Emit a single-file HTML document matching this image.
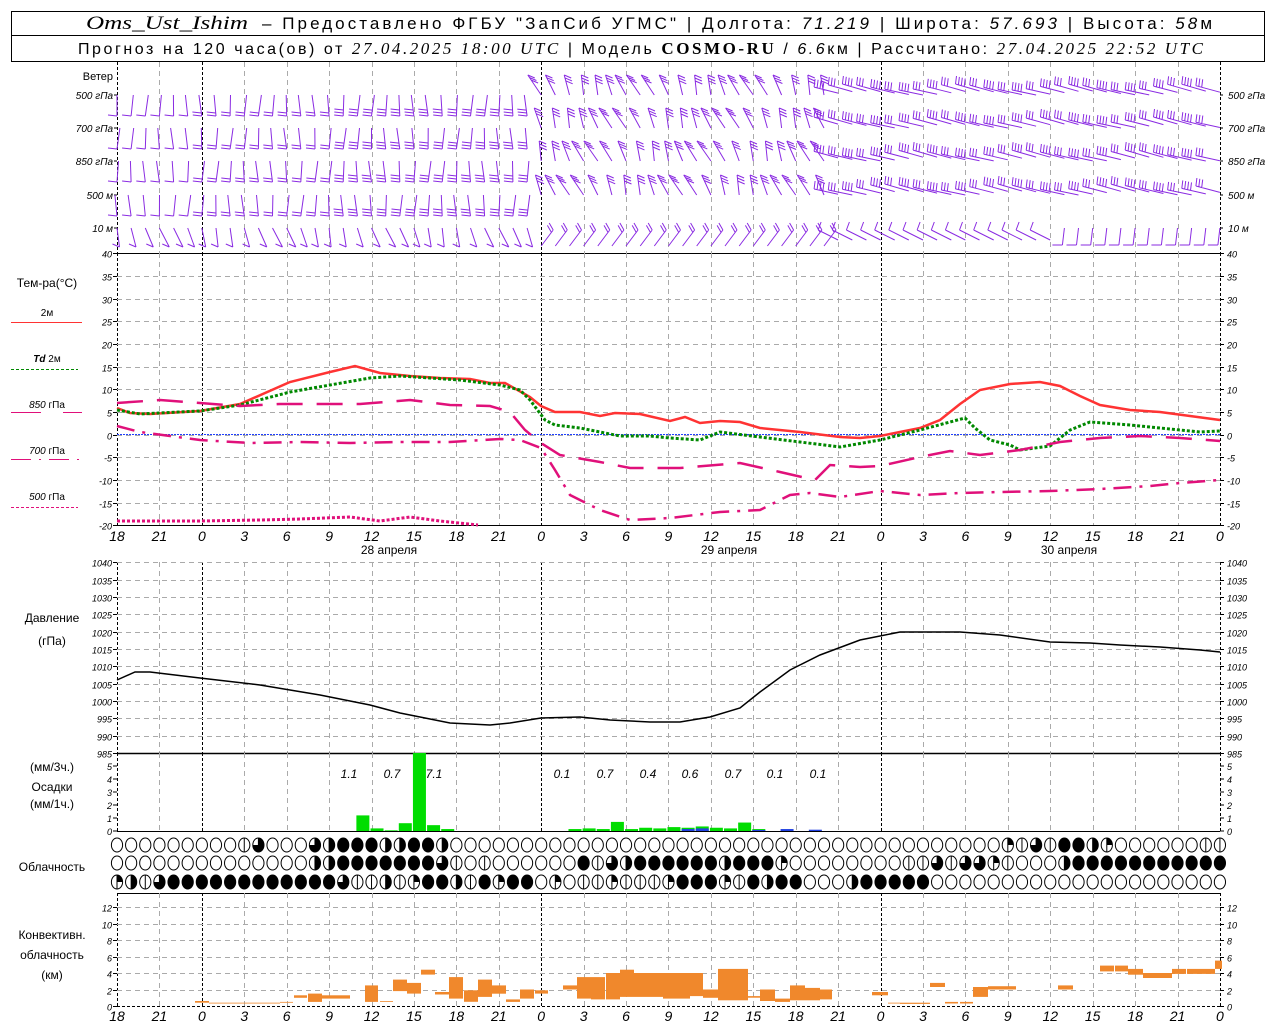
<!DOCTYPE html>
<html><head><meta charset="utf-8">
<style>
html,body{margin:0;padding:0;background:#fff;}
body{width:1280px;height:1024px;overflow:hidden;}
svg{display:block;font-family:"Liberation Sans","DejaVu Sans",sans-serif;}
</style></head>
<body>
<svg id="s" width="1280" height="1024" viewBox="0 0 1280 1024" xmlns="http://www.w3.org/2000/svg">
<rect x="0" y="0" width="1280" height="1024" fill="#fff"/>
<rect x="11.5" y="11.5" width="1253" height="50" fill="none" stroke="#000"/>
<line x1="11" y1="35.5" x2="1265" y2="35.5" stroke="#000"/>
<text x="86" y="29" font-size="19" font-family="Liberation Serif,serif" font-style="italic" textLength="162" lengthAdjust="spacingAndGlyphs">Oms_Ust_Ishim</text>
<text x="262" y="29" font-size="17" textLength="950" lengthAdjust="spacing">– Предоставлено ФГБУ "ЗапСиб УГМС" | Долгота: <tspan font-style="italic">71.219</tspan> | Широта: <tspan font-style="italic">57.693</tspan> | Высота: <tspan font-style="italic">58</tspan>м</text>
<text x="78" y="54" font-size="16" textLength="1125" lengthAdjust="spacing">Прогноз на 120 часа(ов) от <tspan font-style="italic" font-family="Liberation Serif,serif" font-size="17">27.04.2025 18:00 UTC</tspan>  | Модель <tspan font-family="Liberation Serif,serif" font-weight="bold" font-size="17">COSMO-RU</tspan> / <tspan font-style="italic">6.6</tspan>км | Рассчитано: <tspan font-style="italic" font-family="Liberation Serif,serif" font-size="17">27.04.2025 22:52 UTC</tspan></text>
<g id="g"></g>
</svg>
<script>
var g=document.getElementById('g');var out='';
function X(h){return 117+h*14.14;}
var X0=117,X1=1220;
function ln(x1,y1,x2,y2,st){out+='<line x1="'+x1+'" y1="'+y1+'" x2="'+x2+'" y2="'+y2+'" style="'+st+'"/>';}
function tx(x,y,t,st){out+='<text x="'+x+'" y="'+y+'" style="'+st+'">'+t+'</text>';}
var GR='stroke:#aaa;stroke-width:1;stroke-dasharray:5,4';
var MD='stroke:#000;stroke-width:1;stroke-dasharray:3,2';
function vgrid(y1,y2){for(var k=0;k<=26;k++){var x=Math.round(X(k*3))+0.5;var mid=(k%8==2);ln(x,y1,x,y2,mid||k==0?MD:GR);}ln(X1+0.5,y1,X1+0.5,y2,MD);}
// Wind panel
vgrid(62,253);
tx(113,80,'Ветер','font-size:11px;text-anchor:end');
var wr=[[95,'500 гПа'],[128,'700 гПа'],[161,'850 гПа'],[195,'500 м'],[228,'10 м']];
wr.forEach(function(r){tx(113,r[0]+4,r[1],'font-size:10px;text-anchor:end;font-style:italic');tx(1228,r[0]+4,r[1],'font-size:10px;font-style:italic');ln(114,r[0],117,r[0],'stroke:#000');ln(1220,r[0],1223,r[0],'stroke:#000');});
var bp='';
function f1(v){return v.toFixed(1);}
// staff P1->P2, feathers starting at P2 going back toward P1, feather vector (fx,fy)
function barb(x1,y1,x2,y2,n,fx,fy){bp+='M'+f1(x1)+' '+f1(y1)+'L'+f1(x2)+' '+f1(y2);var L=Math.hypot(x2-x1,y2-y1),ux=(x1-x2)/L,uy=(y1-y2)/L;for(var k=0;k<n;k++){var px=x2+ux*3*k,py=y2+uy*3*k;bp+='M'+f1(px)+' '+f1(py)+'l'+f1(fx)+' '+f1(fy);}}
for(var ri=0;ri<5;ri++){var y=wr[ri][0];for(var i=0;i<=78;i++){var x=X(i),s=Math.sin(i*0.8+ri*1.3);
 if(ri==4){
  if(x<540){barb(x,y,x+6+4*s,y+19,1,-7,-3);}
  else if(x<830){barb(x,y+18,x+12,y+2,2,-4,-7);}
  else if(x<1060){barb(x,y+12,x-20,y+2,1,3,-8);}
  else{barb(x,y,x-2,y+17,1,-10,0);}
  continue;}
 if(x<540){var n=(x<200?1:(x<330?2:3));barb(x+3*s,y,x,y+21,n,-9,-1);}
 else if(x<830){barb(x,y,x-8+6*s,y-20,3,7,3);}
 else{var n2=3+(i%2);barb(x,y-2+2*s,x-24,y-8+3*s,n2,1,-8);}
}}
out+='<path d="'+bp+'" fill="none" stroke="#8a2be2" stroke-width="1"/>';
ln(117,253.5,1220,253.5,'stroke:#000');
// Temperature panel
function TY(t){return 434.6-t*4.533;}
vgrid(253,525);
for(var t=-20;t<=40;t+=5){var y=Math.round(TY(t))+0.5;if(t>-20&&t<40)ln(117,y,1220,y,GR);ln(113,y,117,y,'stroke:#000');ln(1220,y,1224,y,'stroke:#000');tx(112,y+4,t,'font-size:9px;text-anchor:end;font-style:italic');tx(1227,y+4,t,'font-size:9px;font-style:italic');}
ln(117,525.5,1220,525.5,'stroke:#000');
ln(117,434.5,1220,434.5,'stroke:#2040ff;stroke-dasharray:2,1');
tx(47,287,'Тем-ра(°С)','font-size:12px;text-anchor:middle');
tx(47,316,'2м','font-size:10px;text-anchor:middle');ln(11,322.5,82,322.5,'stroke:#f33;stroke-width:1');
tx(47,362,'<tspan font-style="italic" font-weight="bold">Td</tspan>  2м','font-size:10px;text-anchor:middle');ln(11,369.5,78,369.5,'stroke:#080;stroke-dasharray:3,2');
tx(47,408,'<tspan font-style="italic">850</tspan> гПа','font-size:10px;text-anchor:middle');ln(11,412.5,82,412.5,'stroke:#e0107a;stroke-dasharray:30,22');
tx(47,454,'<tspan font-style="italic">700</tspan> гПа','font-size:10px;text-anchor:middle');ln(11,459.5,82,459.5,'stroke:#e0107a;stroke-dasharray:20,8,2,8');
tx(47,500,'<tspan font-style="italic">500</tspan> гПа','font-size:10px;text-anchor:middle');ln(11,507.5,78,507.5,'stroke:#e0107a;stroke-dasharray:3,2');
function pl(pts,st){var d='M';for(var i=0;i<pts.length;i+=2){d+=(i?'L':'')+pts[i]+' '+pts[i+1];}out+='<path d="'+d+'" fill="none" style="'+st+'"/>';}
pl([117,408,130,413,150,414,200,411,240,404,290,382,330,372,355,366,380,373,410,376,440,378,470,379,490,383,505,383,530,397,541,406,555,412,580,412,600,416,615,413,640,414,670,421,685,417,700,423,720,421,740,422,760,428,800,432,840,437,860,438,880,436,920,428,940,420,960,404,980,390,1010,384,1040,382,1060,386,1080,396,1100,405,1130,410,1160,412,1190,416,1220,420],'stroke:#f33;stroke-width:2.5');
pl([117,410,140,414,200,411,240,405,290,392,330,385,370,378,400,376,430,378,460,380,500,385,520,390,530,400,545,420,555,425,580,428,600,432,620,436,650,436,670,438,700,440,720,432,760,437,800,442,840,447,880,440,920,430,950,422,965,418,975,428,990,440,1010,445,1020,450,1050,446,1070,430,1090,422,1130,425,1160,428,1200,432,1220,431],'stroke:#080;stroke-width:3;stroke-dasharray:3,2');
pl([117,403,160,400,200,403,240,406,280,404,320,404,360,404,410,400,450,405,490,406,510,412,525,430,541,443,560,455,600,462,630,468,680,468,740,463,780,472,815,480,830,465,860,467,880,466,920,457,950,451,980,455,1020,450,1060,442,1100,438,1140,436,1180,438,1220,441],'stroke:#e0107a;stroke-width:2.5;stroke-dasharray:26,14');
pl([117,426,140,432,200,440,250,443,300,442,350,443,400,442,450,442,500,439,520,440,541,448,555,470,570,495,600,510,630,520,670,518,720,512,760,510,790,495,810,493,840,497,880,491,920,495,960,493,1000,492,1050,491,1100,489,1150,486,1180,483,1220,480],'stroke:#e0107a;stroke-width:2.5;stroke-dasharray:18,8,3,8');
pl([117,521,200,521,260,520,300,519,350,517,380,521,410,517,440,521,478,525],'stroke:#e0107a;stroke-width:3;stroke-dasharray:3,2');
function xlabels(y){for(var k=0;k<=26;k++){var hh=(18+k*3)%24;tx(X(k*3),y,hh,'font-size:14px;font-style:italic;text-anchor:middle');}}
xlabels(541);
tx(389,554,'28  апреля','font-size:12px;text-anchor:middle');tx(729,554,'29  апреля','font-size:12px;text-anchor:middle');tx(1069,554,'30  апреля','font-size:12px;text-anchor:middle');
// Pressure
function PY(p){return 753-(p-985)*3.47;}
vgrid(562,753);
for(var p=985;p<=1040;p+=5){var y=Math.round(PY(p))+0.5;if(p>985)ln(117,y,1220,y,GR);ln(113,y,117,y,'stroke:#000');ln(1220,y,1224,y,'stroke:#000');tx(112,y+4,p,'font-size:9px;text-anchor:end;font-style:italic');tx(1227,y+4,p,'font-size:9px;font-style:italic');}
tx(52,622,'Давление','font-size:12px;text-anchor:middle');tx(52,645,'(гПа)','font-size:12px;text-anchor:middle');
pl([117,680,135,672,150,672,200,678,260,685,320,695,370,705,400,713,450,723,490,725,510,723,541,718,580,717,610,720,650,722,680,722,710,717,740,708,760,692,790,670,820,655,860,640,900,632,960,632,1000,635,1050,642,1090,643,1120,645,1160,647,1200,650,1220,652],'stroke:#000;stroke-width:1.5');
ln(117,753.5,1220,753.5,'stroke:#000;stroke-width:1.5');
// Precip
vgrid(753,831);
for(var m=0;m<=5;m++){var y=831-m*13;ln(113,y,117,y,'stroke:#000');ln(1220,y,1224,y,'stroke:#000');tx(112,y+4,m,'font-size:9px;text-anchor:end;font-style:italic');tx(1227,y+4,m,'font-size:9px;font-style:italic');}
tx(52,771,'(мм/3ч.)','font-size:12px;text-anchor:middle');tx(52,791,'Осадки','font-size:12px;text-anchor:middle');tx(52,808,'(мм/1ч.)','font-size:12px;text-anchor:middle');
var pr=[[17,1.2],[18,0.2],[19,0.05],[20,0.6],[21,6.5],[22,0.45],[23,0.15],[32,0.15],[33,0.2],[34,0.15],[35,0.7],[36,0.15],[37,0.25],[38,0.2],[39,0.3],[40,0.25],[41,0.35],[42,0.25],[43,0.2],[44,0.65],[45,0.15]];
pr.forEach(function(b){var h=Math.min(b[1]*13,78);out+='<rect x="'+(X(b[0])-1)+'" y="'+(831-h)+'" width="13" height="'+h+'" fill="#00dd00"/>';});
[[40,0.15],[41,0.2],[45,0.08],[47,0.15],[49,0.1]].forEach(function(b){var h=b[1]*13;out+='<rect x="'+(X(b[0])-1)+'" y="'+(831-h)+'" width="13" height="'+h+'" fill="#2040e0"/>';});
[[349,'1.1'],[392,'0.7'],[434,'7.1'],[562,'0.1'],[605,'0.7'],[648,'0.4'],[690,'0.6'],[733,'0.7'],[775,'0.1'],[818,'0.1']].forEach(function(t){tx(t[0],778,t[1],'font-size:12px;font-style:italic;text-anchor:middle');});
ln(117,831.5,1220,831.5,'stroke:#000');
// Clouds
tx(52,871,'Облачность','font-size:12px;text-anchor:middle');
var rows=["000000000530003244422442"+"0".repeat(39)+"15354421"+"000000"+"55",
"00000000000000"+"22"+"4444444"+"3505"+"000000"+"4532"+"444444"+"2444"+"1"+"00000000"+"55353315"+"000"+"2"+"44444444444",
"1253"+"444444444444"+"35525144254144"+"010551555144415"+"4244"+"000"+"2"+"44444"+"0".repeat(21)];
var cy=[845,863,882];
rows.forEach(function(s,ri){for(var i=0;i<79;i++){var c=s[i]||'0',x=X(i),y=cy[ri],rx=5.6,ry=7;out+='<ellipse cx="'+x+'" cy="'+y+'" rx="'+rx+'" ry="'+ry+'" fill="'+(c=='4'?'#000':'#fff')+'" stroke="#000"/>';
 if(c=='5'||c=='2'||c=='1'||c=='3')ln(x,y-ry,x,y+ry,'stroke:#000');
 if(c=='2')out+='<path d="M'+x+' '+(y-ry)+'A'+rx+' '+ry+' 0 0 1 '+x+' '+(y+ry)+'Z" fill="#000"/>';
 if(c=='1')out+='<path d="M'+x+' '+y+'L'+x+' '+(y-ry)+'A'+rx+' '+ry+' 0 0 1 '+(x+rx)+' '+y+'Z" fill="#000"/>';
 if(c=='3')out+='<path d="M'+x+' '+y+'L'+x+' '+(y-ry)+'A'+rx+' '+ry+' 0 1 1 '+(x-rx)+' '+y+'Z" fill="#000"/>';}});
// Convective
function KY(k){return 1006-k*8.25;}
ln(117,893.5,1220,893.5,'stroke:#000');
vgrid(893,1006);
for(var k=0;k<=12;k+=2){var y=Math.round(KY(k))+0.5;if(k>0)ln(117,y,1220,y,GR);ln(113,y,117,y,'stroke:#000');ln(1220,y,1224,y,'stroke:#000');tx(112,y+4,k,'font-size:9px;text-anchor:end;font-style:italic');tx(1227,y+4,k,'font-size:9px;font-style:italic');}
ln(117,1006.5,1220,1006.5,'stroke:#000;stroke-dasharray:3,2');
tx(52,939,'Конвективн.','font-size:12px;text-anchor:middle');tx(52,959,'облачность','font-size:12px;text-anchor:middle');tx(52,979,'(км)','font-size:12px;text-anchor:middle');
var cb=[[195,209,.4,.6],[209,280,.3,.4],[280,293,.4,.5],[294,307,1,1.3],[308,322,.5,1.5],[322,350,.9,1.3],[365,378,.5,2.5],[380,393,.5,.6],[393,407,1.8,3.2],[407,421,1.5,2.8],[421,435,3.8,4.4],[435,449,1.4,1.7],[449,463,.9,3.5],[464,478,.5,1.9],[478,492,1.1,3.2],[492,506,1.5,2.5],[506,520,.5,.8],[520,534,.9,2],[535,548,1.5,1.9],[563,577,2,2.5],[577,591,.9,3.5],[591,605,.8,3.5],[606,620,.8,4],[620,634,1.1,4.4],[634,663,1.1,4],[663,690,.9,4],[690,703,1.2,4],[703,718,1,2],[718,748,.7,4.5],[748,760,1,1.2],[760,775,.6,2],[775,790,.5,.9],[790,805,.7,2.5],[805,820,.7,2.2],[820,832,.8,2],[872,888,1.3,1.7],[888,900,.3,.4],[900,930,.25,.4],[930,945,2.3,2.8],[945,958,.3,.5],[960,973,.3,.5],[973,988,1.1,2.3],[988,1016,2,2.4],[1058,1073,2,2.5],[1100,1114,4.2,4.9],[1115,1128,4.2,4.9],[1128,1143,3.8,4.5],[1143,1172,3.4,4.0],[1172,1186,3.9,4.5],[1187,1200,3.9,4.5],[1200,1215,3.9,4.5],[1215,1222,4.5,5.5]];
cb.forEach(function(b){var y1=KY(b[3]),y2=KY(b[2]);out+='<rect x="'+b[0]+'" y="'+y1.toFixed(1)+'" width="'+(b[1]-b[0])+'" height="'+(y2-y1).toFixed(1)+'" fill="#f0882c"/>';});
xlabels(1021);
g.innerHTML=out;
</script>
</body></html>
